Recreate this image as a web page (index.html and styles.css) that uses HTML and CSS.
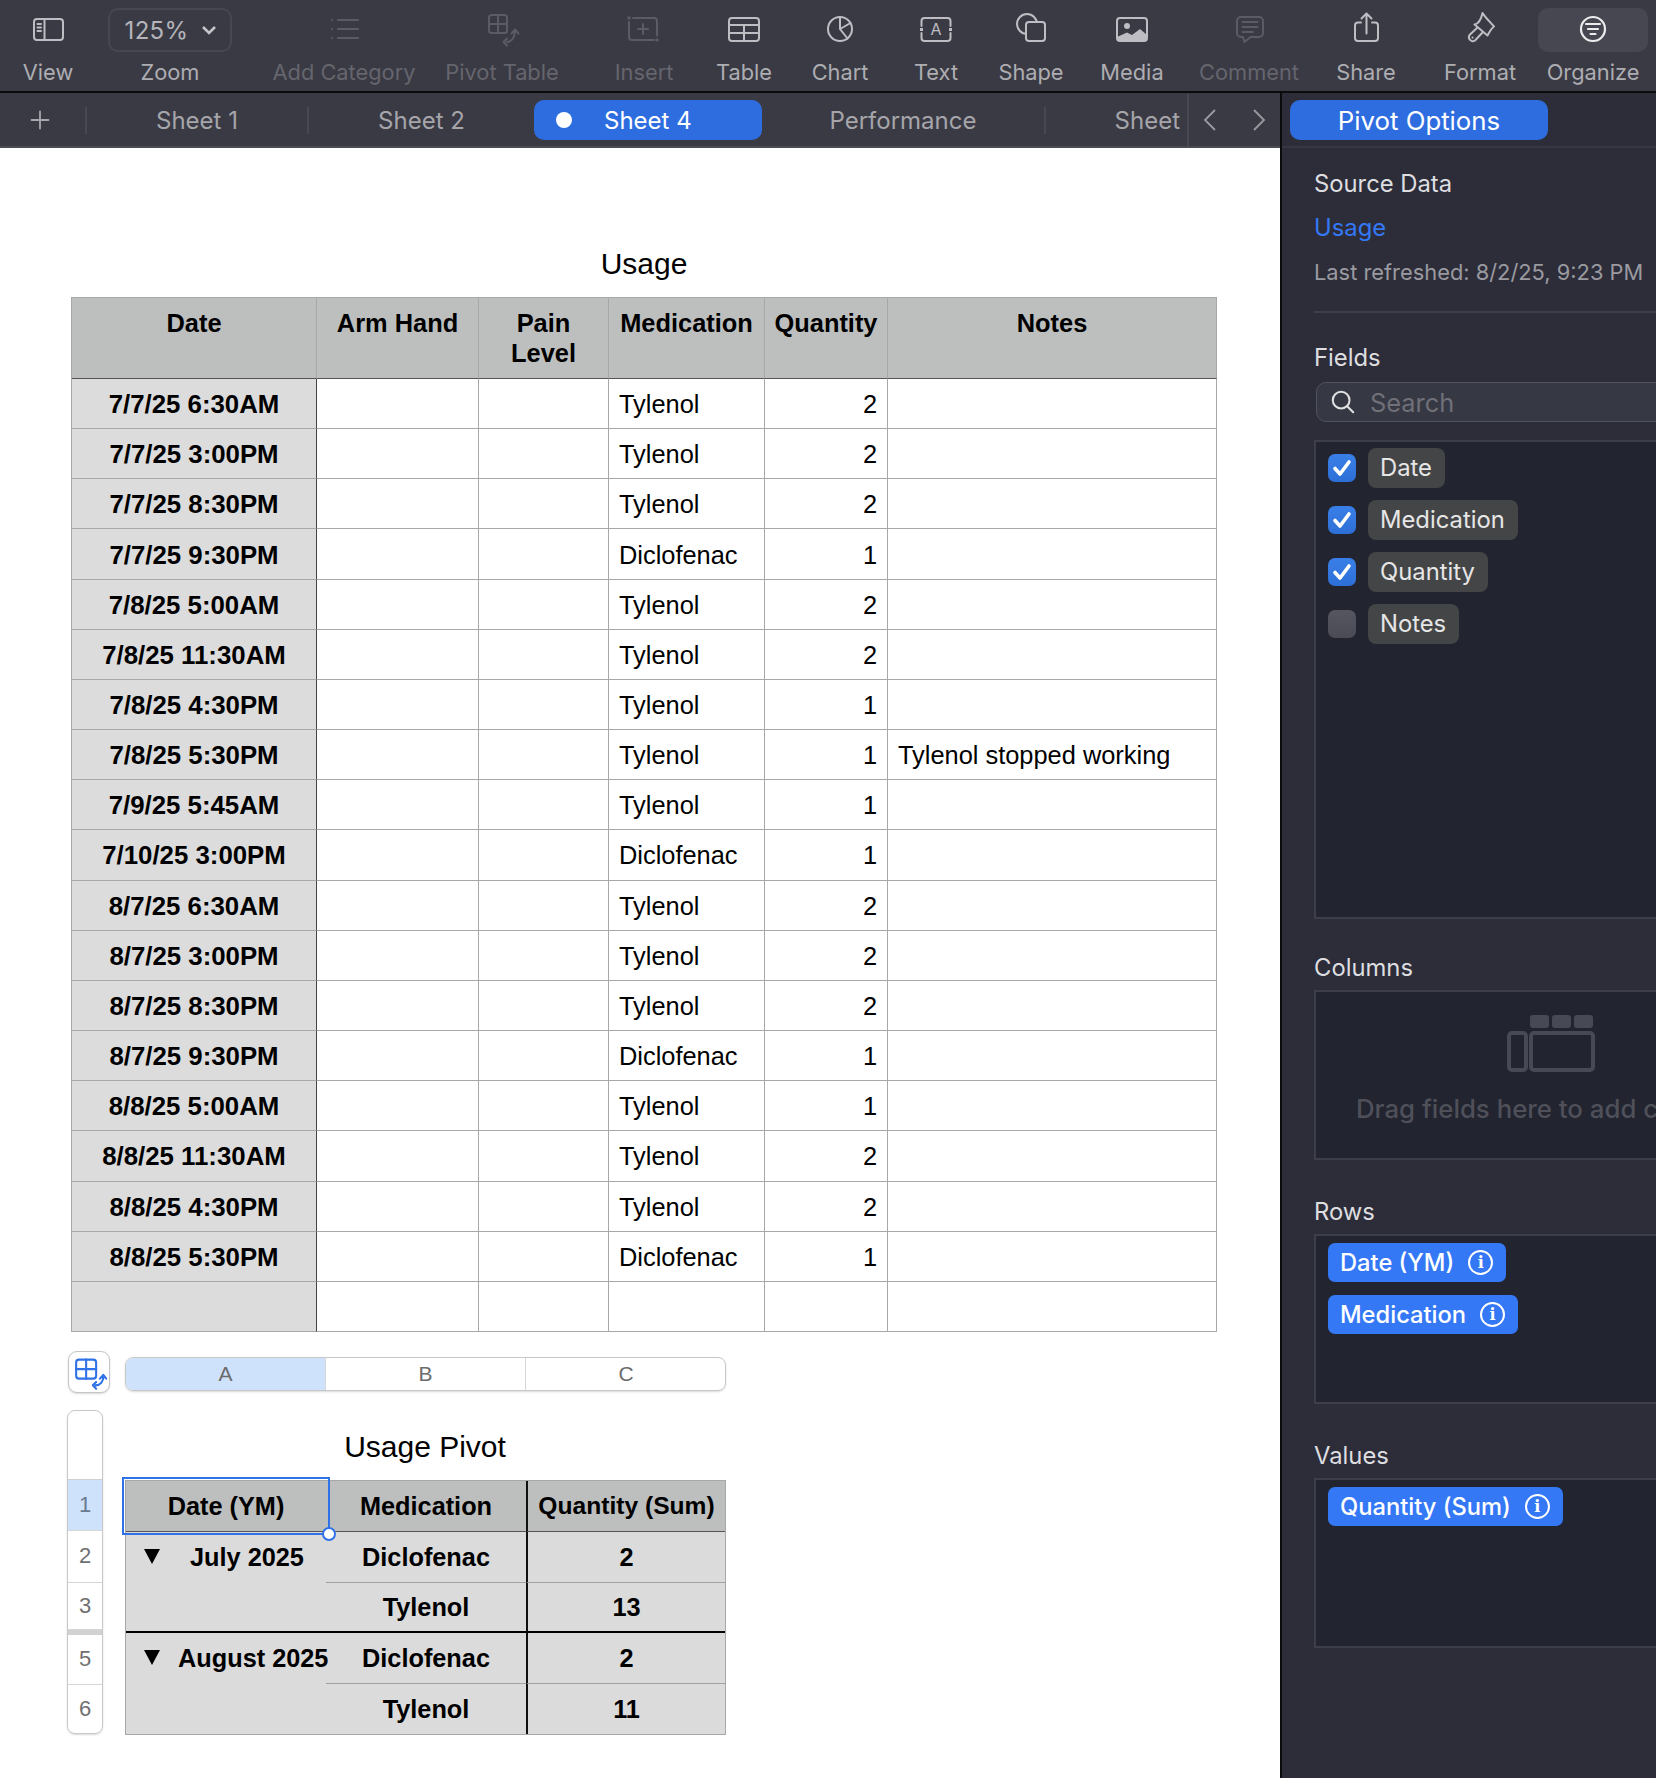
FILE: index.html
```html
<!DOCTYPE html>
<html lang="en">
<head>
<meta charset="utf-8">
<title>Usage Pivot</title>
<link rel="stylesheet" href="styles.css">
</head>
<body>
<div class="app">
  <header class="toolbar">
    <div class="tool"><div class="tool-icon"><svg class="ico" viewBox="0 0 44 44"><rect x="8" y="11" width="29" height="21" rx="3"/><path d="M18.5 11V32M11.5 16H15M11.5 19.5H15M11.5 23H15"/></svg></div><span class="tool-label">View</span></div>
    <div class="tool"><div class="zoom-box"><span>125%</span><svg class="chev" viewBox="0 0 16 10"><path d="M2 2L8 8L14 2"/></svg></div><span class="tool-label">Zoom</span></div>
    <div class="tool off"><div class="tool-icon"><svg class="ico" viewBox="0 0 44 44"><path d="M16 12H36M16 21H36M16 30H36"/><path class="dots" d="M9 10.5L11.5 12L9 13.500ZM9 19.500L11.500 21L9 22.500ZM9 28.500L11.500 30L9 31.500Z"/></svg></div><span class="tool-label">Add Category</span></div>
    <div class="tool off"><div class="tool-icon"><svg class="ico" viewBox="0 0 44 44"><rect x="9" y="7" width="18" height="18" rx="2.500"/><path d="M18 7V25M9 16H27"/><path d="M27 34C31 34 35 30 35 23M31.500 25.500L35 21.500L38.500 25.500M27 30.500L23.500 34L27 37.500"/></svg></div><span class="tool-label">Pivot Table</span></div>
    <div class="tool off"><div class="tool-icon"><svg class="ico" viewBox="0 0 44 44"><path d="M11 10H32A3 3 0 0 1 35 13V27.500M32 32H10A3 3 0 0 1 7 29V14M21 16V26M16 21H26"/><path class="dots" d="M5.500 8.500H8.500V11.500H5.500ZM33.500 30.500H36.500V33.500H33.500Z"/></svg></div><span class="tool-label">Insert</span></div>
    <div class="tool"><div class="tool-icon"><svg class="ico" viewBox="0 0 44 44"><rect x="7" y="10" width="30" height="23" rx="3"/><path d="M7 17H37M7 25H37M22 17V33"/></svg></div><span class="tool-label">Table</span></div>
    <div class="tool"><div class="tool-icon"><svg class="ico" viewBox="0 0 44 44"><circle cx="22" cy="21" r="12"/><path d="M22 9V21L32.500 15M22 21L29.500 30.500"/></svg></div><span class="tool-label">Chart</span></div>
    <div class="tool"><div class="tool-icon"><svg class="ico" viewBox="0 0 44 44"><path d="M7.500 18V13A3 3 0 0 1 10.500 10H33.500A3 3 0 0 1 36.500 13V18M7.500 25V30A3 3 0 0 0 10.500 33H33.500A3 3 0 0 0 36.500 30V25"/><path class="dots" d="M6 20H9V23H6ZM35 20H38V23H35Z"/><text class="ico-letter" x="22" y="27" text-anchor="middle">A</text></svg></div><span class="tool-label">Text</span></div>
    <div class="tool"><div class="tool-icon"><svg class="ico" viewBox="0 0 44 44"><circle cx="18" cy="16" r="10"/><rect class="bgfill" x="17" y="14" width="19" height="19" rx="3"/></svg></div><span class="tool-label">Shape</span></div>
    <div class="tool"><div class="tool-icon"><svg class="ico" viewBox="0 0 44 44"><rect x="7" y="10" width="30" height="23" rx="3"/><circle class="dots" cx="17" cy="18" r="3"/><path class="dots" d="M7 33V29L17 24.500L22 27L30 21L37 27V33Z"/></svg></div><span class="tool-label">Media</span></div>
    <div class="tool off"><div class="tool-icon"><svg class="ico" viewBox="0 0 44 44"><path d="M14 9H32A4 4 0 0 1 36 13V25A4 4 0 0 1 32 29H23.500L17.500 34L16 29H14A4 4 0 0 1 10 25V13A4 4 0 0 1 14 9ZM15.500 14H30.500M15.500 19H30.500M15.500 24H26"/></svg></div><span class="tool-label">Comment</span></div>
    <div class="tool"><div class="tool-icon"><svg class="ico" viewBox="0 0 44 44"><path d="M17 14.500H14A3 3 0 0 0 11 17.500V30A3 3 0 0 0 14 33H31A3 3 0 0 0 34 30V17.500A3 3 0 0 0 31 14.500H28M22.500 25.500V6M17.500 10.500L22.500 5.500L27.500 10.500"/></svg></div><span class="tool-label">Share</span></div>
    <div class="tool"><div class="tool-icon"><svg class="ico" viewBox="0 0 44 44"><path d="M24.500 5C26 8 33 15 36 18.500C33 20.500 31 25 29.500 27.500L16.500 16.500C20 16 23 12 24.500 5Z"/><path d="M19.500 19.500L11.500 27A4 4 0 0 0 17 32.500L25 24M14.500 29.500L14.600 29.600"/></svg></div><span class="tool-label">Format</span></div>
    <div class="tool"><div class="tool-icon active"><svg class="ico ico-white" viewBox="0 0 44 44"><circle cx="22" cy="21" r="12"/><path d="M15 16H29M17 21H27M19.500 26H24.500"/></svg></div><span class="tool-label">Organize</span></div>
  </header>

  <div class="workspace">
    <main class="doc">
      <nav class="tabs">
        <div class="tab tab-add"><svg class="plus" viewBox="0 0 24 24"><path d="M12 2V22M2 12H22"/></svg></div>
        <div class="tab tab-one">Sheet 1</div>
        <div class="tab tab-two">Sheet 2</div>
        <div class="tab tab-active"><span class="tab-dot"></span><span class="tab-name">Sheet 4</span></div>
        <div class="tab tab-perf">Performance</div>
        <div class="tab tab-cut">Sheet</div>
        <div class="tab-nav">
          <svg class="nav-chev" viewBox="0 0 14 24"><path d="M12 2L2 12L12 22"/></svg>
          <svg class="nav-chev" viewBox="0 0 14 24"><path d="M2 2L12 12L2 22"/></svg>
        </div>
      </nav>

      <div class="canvas">
        <h2 class="table-title">Usage</h2>
        <table class="usage">
          <colgroup><col class="c1"><col class="c2"><col class="c3"><col class="c4"><col class="c5"><col class="c6"></colgroup>
          <thead>
            <tr><th>Date</th><th>Arm Hand</th><th>Pain<br>Level</th><th>Medication</th><th>Quantity</th><th>Notes</th></tr>
          </thead>
          <tbody>
            <tr><th>7/7/25 6:30AM</th><td></td><td></td><td>Tylenol</td><td class="num">2</td><td></td></tr>
            <tr><th>7/7/25 3:00PM</th><td></td><td></td><td>Tylenol</td><td class="num">2</td><td></td></tr>
            <tr><th>7/7/25 8:30PM</th><td></td><td></td><td>Tylenol</td><td class="num">2</td><td></td></tr>
            <tr><th>7/7/25 9:30PM</th><td></td><td></td><td>Diclofenac</td><td class="num">1</td><td></td></tr>
            <tr><th>7/8/25 5:00AM</th><td></td><td></td><td>Tylenol</td><td class="num">2</td><td></td></tr>
            <tr><th>7/8/25 11:30AM</th><td></td><td></td><td>Tylenol</td><td class="num">2</td><td></td></tr>
            <tr><th>7/8/25 4:30PM</th><td></td><td></td><td>Tylenol</td><td class="num">1</td><td></td></tr>
            <tr><th>7/8/25 5:30PM</th><td></td><td></td><td>Tylenol</td><td class="num">1</td><td>Tylenol stopped working</td></tr>
            <tr><th>7/9/25 5:45AM</th><td></td><td></td><td>Tylenol</td><td class="num">1</td><td></td></tr>
            <tr><th>7/10/25 3:00PM</th><td></td><td></td><td>Diclofenac</td><td class="num">1</td><td></td></tr>
            <tr><th>8/7/25 6:30AM</th><td></td><td></td><td>Tylenol</td><td class="num">2</td><td></td></tr>
            <tr><th>8/7/25 3:00PM</th><td></td><td></td><td>Tylenol</td><td class="num">2</td><td></td></tr>
            <tr><th>8/7/25 8:30PM</th><td></td><td></td><td>Tylenol</td><td class="num">2</td><td></td></tr>
            <tr><th>8/7/25 9:30PM</th><td></td><td></td><td>Diclofenac</td><td class="num">1</td><td></td></tr>
            <tr><th>8/8/25 5:00AM</th><td></td><td></td><td>Tylenol</td><td class="num">1</td><td></td></tr>
            <tr><th>8/8/25 11:30AM</th><td></td><td></td><td>Tylenol</td><td class="num">2</td><td></td></tr>
            <tr><th>8/8/25 4:30PM</th><td></td><td></td><td>Tylenol</td><td class="num">2</td><td></td></tr>
            <tr><th>8/8/25 5:30PM</th><td></td><td></td><td>Diclofenac</td><td class="num">1</td><td></td></tr>
            <tr><th></th><td></td><td></td><td></td><td></td><td></td></tr>
          </tbody>
        </table>

        <div class="column-row">
          <div class="corner-btn"><svg class="corner-ico" viewBox="0 0 42 42"><rect x="7.500" y="8" width="21" height="20" rx="3"/><path d="M18 8V28M7.500 18H28.500"/><path d="M28 35C33 35 36 31 36 26M32.500 28L36 24L39 28M28.500 31.500L25 35L28.500 38.500"/></svg></div>
          <div class="column-bar"><span class="col-head sel">A</span><span class="col-head">B</span><span class="col-head">C</span></div>
        </div>

        <div class="pivot-row">
          <div class="row-bar">
            <div class="rb-top"></div>
            <div class="rb sel rb1">1</div>
            <div class="rb rb2">2</div>
            <div class="rb rb3">3</div>
            <div class="rb-gap"></div>
            <div class="rb rb5">5</div>
            <div class="rb rb6">6</div>
          </div>
          <div class="pivot">
            <h2 class="pivot-title">Usage Pivot</h2>
            <div class="pivot-wrap">
              <table class="pv">
                <colgroup><col class="p1"><col class="p2"><col class="p3"></colgroup>
                <thead><tr><th>Date (YM)</th><th>Medication</th><th class="qty qty-head">Quantity (Sum)</th></tr></thead>
                <tbody>
                  <tr class="r2"><th rowspan="2" class="group"><div class="grp"><span class="tri"></span><span class="grp-name">July 2025</span></div></th><td>Diclofenac</td><td class="qty">2</td></tr>
                  <tr class="r3 endgroup"><td>Tylenol</td><td class="qty">13</td></tr>
                  <tr class="r5"><th rowspan="2" class="group"><div class="grp"><span class="tri"></span><span class="grp-name">August 2025</span></div></th><td>Diclofenac</td><td class="qty">2</td></tr>
                  <tr class="r6"><td>Tylenol</td><td class="qty">11</td></tr>
                </tbody>
              </table>
              <div class="selection"><span class="handle"></span></div>
            </div>
          </div>
        </div>
      </div>
    </main>

    <aside class="side">
      <div class="side-tabs"><div class="side-pill">Pivot Options</div></div>
      <div class="side-body">
        <section class="source">
          <div class="h">Source Data</div>
          <div class="link">Usage</div>
          <div class="meta">Last refreshed: 8/2/25, 9:23 PM</div>
        </section>
        <section class="fields">
          <div class="h">Fields</div>
          <div class="search">
            <svg class="search-ico" viewBox="0 0 28 28"><circle cx="12" cy="12" r="9"/><path d="M18.500 18.500L25 25"/></svg>
            <span>Search</span>
          </div>
          <div class="well well-fields">
            <div class="field"><span class="check on"><svg viewBox="0 0 28 28"><path d="M7 14.500L12 20L21 8"/></svg></span><span class="chip">Date</span></div>
            <div class="field"><span class="check on"><svg viewBox="0 0 28 28"><path d="M7 14.500L12 20L21 8"/></svg></span><span class="chip">Medication</span></div>
            <div class="field"><span class="check on"><svg viewBox="0 0 28 28"><path d="M7 14.500L12 20L21 8"/></svg></span><span class="chip">Quantity</span></div>
            <div class="field"><span class="check"></span><span class="chip">Notes</span></div>
          </div>
        </section>
        <section class="zone zone-cols">
          <div class="h">Columns</div>
          <div class="well well-drop">
            <svg class="drop-ico" viewBox="0 0 90 66"><rect class="dk" x="24" y="1" width="19" height="13" rx="3"/><rect class="dk" x="46" y="1" width="19" height="13" rx="3"/><rect class="dk" x="68" y="1" width="19" height="13" rx="3"/><rect class="ol" x="3" y="19" width="17" height="37" rx="3"/><rect class="ol" x="25" y="19" width="62" height="37" rx="3"/></svg>
            <div class="drop-text">Drag fields here to add columns</div>
          </div>
        </section>
        <section class="zone zone-rows">
          <div class="h">Rows</div>
          <div class="well well-stack">
            <span class="pill">Date (YM)<span class="info">i</span></span>
            <span class="pill">Medication<span class="info">i</span></span>
          </div>
        </section>
        <section class="zone zone-vals">
          <div class="h">Values</div>
          <div class="well well-stack">
            <span class="pill">Quantity (Sum)<span class="info">i</span></span>
          </div>
        </section>
      </div>
    </aside>
  </div>
</div>
</body>
</html>
```
FILE: styles.css
```css
* { box-sizing: border-box; }
html, body { margin: 0; padding: 0; }
body {
  width: 1656px;
  height: 1778px;
  overflow: hidden;
  background: #fff;
  font-family: "Inter", "Liberation Sans", sans-serif;
}
.app { display: flex; flex-direction: column; width: 1656px; height: 1778px; }

/* toolbar */
.toolbar {
  flex: none;
  height: 93px;
  padding-left: 24px;
  display: grid;
  grid-template-columns: 48px 196px 152px 164px 120px 80px 112px 80px 110px 92px 142px 92px 136px 90px;
  background: #3a3a44;
  border-bottom: 2px solid #0b0b0d;
}
.tool { display: flex; flex-direction: column; align-items: center; padding-top: 8px; color: #adadb2; min-width: 0; }
.tool.off { color: #65656d; }
.tool-label { flex: none; margin-top: 7px; height: 26px; font-size: 21.800px; line-height: 26px; white-space: nowrap; }
.tool-icon { flex: none; width: 44px; height: 44px; display: flex; justify-content: center; align-items: center; }
.tool-icon.active { width: 110px; background: #474751; border-radius: 10px; }
.ico { width: 44px; height: 44px; fill: none; stroke: #bdbdc3; stroke-width: 2; stroke-linecap: round; stroke-linejoin: round; }
.off .ico { stroke: #5b5b64; }
.ico .dots { fill: #bdbdc3; stroke: none; }
.off .ico .dots { fill: #5b5b64; }
.ico .bgfill { fill: #3a3a44; }
.ico-white { stroke: #ececee; stroke-width: 2.200; }
.ico-letter { font-family: "Inter", sans-serif; font-size: 16px; fill: #bdbdc3; stroke: none; }
.zoom-box {
  flex: none;
  width: 124px; height: 44px;
  border: 2px solid #474751; border-radius: 10px;
  display: flex; align-items: center; justify-content: center; gap: 13px;
  font-size: 24px; letter-spacing: 0.300px; color: #b4b4ba; padding-left: 2px;
}
.chev { width: 16px; height: 10px; fill: none; stroke: #c4c4c9; stroke-width: 2.600; }

/* workspace */
.workspace { flex: 1; display: flex; min-height: 0; }
.doc { flex: none; width: 1280px; display: flex; flex-direction: column; }

/* tabs */
.tabs {
  flex: none; height: 55px; display: flex;
  background: #3a3a44; border-bottom: 2px solid #4b4b54;
  font-size: 24px; color: #a5a5aa; align-items: center;
  padding-top: 1px;
}
.tab { flex: none; display: flex; align-items: center; justify-content: center; height: 40px; white-space: nowrap; }
.tab-add { width: 87px; border-right: 2px solid #484851; height: 27px; }
.plus { width: 22px; height: 22px; fill: none; stroke: #a5a5aa; stroke-width: 2; margin-right: 6px; }
.tab-one { width: 222px; border-right: 2px solid #484851; height: 27px; }
.tab-two { width: 225px; }
.tab-active { width: 228px; background: #2e6de0; border-radius: 10px; color: #fff; justify-content: flex-start; }
.tab-dot { width: 16px; height: 16px; border-radius: 50%; background: #fff; margin-left: 22px; }
.tab-name { margin-left: 32px; }
.tab-perf { width: 282px; }
.tab-cut { width: 143px; justify-content: flex-end; padding-right: 7px; border-left: 2px solid #484851; height: 27px; }
.tab-nav {
  flex: 1; align-self: stretch; border-left: 2px solid #484851;
  display: flex; justify-content: space-between; align-items: center; padding: 0 14px 0 14px;
}
.nav-chev { width: 14px; height: 24px; fill: none; stroke: #9a9aa0; stroke-width: 1.800; }

/* canvas */
.canvas { flex: 1; background: #fff; padding: 98px 0 0 0; color: #000; font-family: "Liberation Sans", Arial, sans-serif; }
.table-title { margin: 0 0 15px; height: 36px; font-size: 30px; line-height: 36px; font-weight: 400; text-align: center; width: 1288px; }

.usage {
  margin-left: 71px; width: 1145px; table-layout: fixed;
  border-collapse: separate; border-spacing: 0;
  border-top: 1px solid #a8a8a8; border-left: 1px solid #a8a8a8;
}
.c1 { width: 245px; } .c2 { width: 162px; } .c3 { width: 130px; } .c4 { width: 156px; } .c5 { width: 123px; } .c6 { width: 329px; }
.usage th, .usage td {
  padding: 1px 10px 0; border-right: 1px solid #a8a8a8; border-bottom: 1px solid #a8a8a8;
  height: 50.170px; font-size: 25.400px; line-height: 30px; white-space: nowrap;
}
.usage thead th {
  height: 81px; padding-top: 10px; vertical-align: top; background: #bdbfbe;
  border-bottom: 1px solid #555; font-weight: 700;
}
.usage thead th:nth-child(4), .usage thead th:nth-child(5) { padding: 10px 0 0; }
.usage tbody th { background: #dcdcdc; font-weight: 700; font-size: 25.800px; text-align: center; border-right: 1px solid #444; }
.usage .num { text-align: right; }

.column-row { display: flex; align-items: flex-start; margin-top: 19px; padding-left: 68px; gap: 15px; }
.corner-btn { width: 42px; height: 42px; border: 1px solid #c6c6c6; border-radius: 9px; box-shadow: 0 1px 2px rgba(0,0,0,.15); background: #fff; }
.corner-ico { display: block; width: 40px; height: 40px; fill: none; stroke: #2f72e8; stroke-width: 2.200; stroke-linecap: round; stroke-linejoin: round; }
.column-bar { display: grid; grid-template-columns: 200px 200px 200px; width: 601px; height: 34px; margin-top: 6px; border: 1px solid #c8c8c8; border-radius: 8px; overflow: hidden; box-shadow: 0 1px 2px rgba(0,0,0,.15); }
.col-head { display: flex; align-items: center; justify-content: center; font-size: 21px; color: #6c6c6c; border-right: 1px solid #d6d6d6; }
.col-head:last-child { border-right: 0; }
.col-head.sel { background: #cfe2fb; }

.pivot-row { display: flex; margin-top: 17px; padding-left: 67px; gap: 22px; }
.row-bar { width: 36px; height: 324px; border: 1px solid #c8c8c8; border-radius: 8px; overflow: hidden; box-shadow: 0 1px 2px rgba(0,0,0,.15); display: flex; flex-direction: column; }
.rb-top { flex: none; height: 69px; border-bottom: 1px solid #d0d0d0; }
.rb { flex: none; display: flex; align-items: center; justify-content: center; font-size: 22px; color: #707070; border-bottom: 1px solid #d6d6d6; }
.rb.sel { background: #cfe2fb; color: #6a7a90; }
.rb1 { height: 51px; } .rb2 { height: 52px; } .rb3 { height: 47px; }
.rb-gap { flex: none; height: 5px; background: #d2d2d2; }
.rb5 { height: 50px; } .rb6 { flex: 1; border-bottom: 0; }

.pivot { width: 600px; }
.pivot-title { margin: 0; height: 70px; padding-top: 19px; font-size: 30px; line-height: 36px; font-weight: 400; text-align: center; }
.pivot-wrap { position: relative; }
.pv { width: 600px; table-layout: fixed; border-collapse: separate; border-spacing: 0; border: 1px solid #a8a8a8; background: #dbdbdb; }
.p1, .p2 { width: 200px; } .p3 { width: 199px; }
.pv th, .pv td { padding: 0; text-align: center; font-size: 25.300px; font-weight: 700; white-space: nowrap; line-height: 30px; }
.pv thead th { height: 51px; background: #bdbfbe; border-bottom: 1px solid #555; }
.pv thead th.qty-head { font-size: 24.600px; }
.pv td { height: 51px; border-bottom: 1px solid #a0a0a0; }
.pv .qty { border-left: 2px solid #111; }
.pv .r6 td { border-bottom: 0; height: 50px; }
.pv .endgroup td { border-bottom: 2px solid #000; height: 50px; }
.pv .group { vertical-align: top; }
.pv .r2 .group { border-bottom: 2px solid #000; }
.grp { display: flex; align-items: center; height: 50px; }
.tri { flex: none; width: 0; height: 0; margin-left: 18px; margin-right: 18px; border-left: 8px solid transparent; border-right: 8px solid transparent; border-top: 15px solid #000; }
.grp-name { flex: 1; min-width: 0; white-space: nowrap; text-align: left; }
.r2 .grp-name { padding-left: 12px; }
.selection { position: absolute; left: -3px; top: -3px; width: 208px; height: 58px; border: 2px solid #2f72e8; pointer-events: none; }
.handle { position: absolute; right: -8px; bottom: -8px; width: 14px; height: 14px; border-radius: 50%; background: #fff; border: 2px solid #2f72e8; }

/* sidebar */
.side { flex: 1; min-width: 0; overflow: hidden; background: #2c2d39; border-left: 2px solid #0b0b0d; color: #dedee0; font-family: "Inter", "Liberation Sans", sans-serif; }
.side-tabs { height: 55px; border-bottom: 2px solid #363743; display: flex; align-items: center; padding: 1px 0 0 8px; }
.side-pill { width: 258px; height: 40px; background: #2e6de0; border-radius: 10px; color: #fff; font-size: 25.800px; display: flex; align-items: center; justify-content: center; }
.side-body { width: 474px; margin-left: 32px; font-size: 23.800px; }
.h { height: 30px; line-height: 30px; }
.source { padding-top: 21px; height: 165px; border-bottom: 2px solid #3d3e4a; }
.link { margin-top: 14px; height: 30px; line-height: 30px; color: #3478f6; }
.meta { margin-top: 14px; height: 30px; line-height: 30px; color: #9a9aa0; font-size: 21.850px; white-space: nowrap; }
.fields { padding-top: 30px; }
.search { margin: 9px 0 0 2px; height: 40px; display: flex; align-items: center; background: #363844; border: 1.500px solid #50525c; border-radius: 10px; color: #6f7078; padding-left: 13px; gap: 14px; font-size: 25.400px; }
.search-ico { width: 26px; height: 26px; fill: none; stroke: #e0e0e2; stroke-width: 2.200; stroke-linecap: round; }
.well { background: #222430; border: 2px solid #3d3e4a; border-right: 0; }
.well-fields { margin-top: 18px; height: 479px; padding: 6px 0 0 12px; }
.field { display: flex; align-items: center; gap: 12px; height: 40px; margin-bottom: 12px; }
.check { flex: none; width: 28px; height: 28px; border-radius: 7px; background: linear-gradient(#55565f, #4a4b55); }
.check.on { background: linear-gradient(#3a7fe8, #2d6fd6); }
.check svg { display: block; width: 28px; height: 28px; fill: none; stroke: #fff; stroke-width: 3.600; stroke-linecap: round; stroke-linejoin: round; }
.chip { height: 40px; line-height: 40px; padding: 0 13px 0 12px; background: #444546; border-radius: 8px; color: #e6e6e6; font-size: 23.800px; }
.zone { padding-top: 37px; }
.zone .h { margin-bottom: 7px; }
.zone-cols { padding-top: 34px; }
.well-drop { height: 170px; display: flex; flex-direction: column; align-items: center; padding: 22px 0 0 0; }
.drop-ico { display: block; width: 90px; height: 66px; transform: translateX(-1px); }
.dk { fill: #474954; }
.ol { fill: none; stroke: #474954; stroke-width: 4; }
.drop-text { color: #4f5059; font-size: 25.800px; font-weight: 500; margin-top: 13px; white-space: nowrap; }
.well-stack { height: 170px; padding: 7px 0 0 12px; display: flex; flex-direction: column; align-items: flex-start; gap: 13px; }
.pill { height: 39px; display: inline-flex; align-items: center; padding: 0 13px 0 12px; background: #3478f6; border-radius: 7px; color: #fff; font-size: 23.700px; font-weight: 500; gap: 14px; white-space: nowrap; }
.info { width: 25px; height: 25px; border: 2px solid #fff; border-radius: 50%; display: flex; align-items: center; justify-content: center; font-size: 16px; font-family: "DejaVu Serif", serif; font-weight: 700; }
```
